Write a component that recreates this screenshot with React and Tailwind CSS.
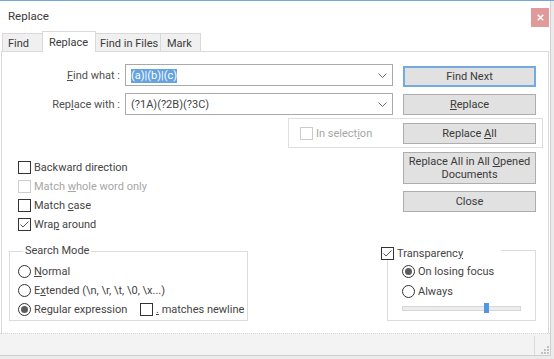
import React from "react";

// small checkbox square, optional tick
const Check = ({ checked, disabled }) => (
  <span
    className={`w-[13px] h-[13px] shrink-0 border bg-white flex items-center justify-center ${
      disabled ? "border-[#cccccc]" : "border-[#333333]"
    }`}
  >
    {checked && (
      <svg width="11" height="11" viewBox="0 0 11 11">
        <path d="M1.5 5.5 L4 8 L9.5 2.5" fill="none" stroke="#5a5a5a" strokeWidth="1" />
      </svg>
    )}
  </span>
);

const Radio = ({ checked }) => (
  <span className="w-[13px] h-[13px] shrink-0 rounded-full border border-[#333333] bg-white flex items-center justify-center">
    {checked && <span className="w-[7px] h-[7px] rounded-full bg-[#5c5c5c]" />}
  </span>
);

const Btn = ({ children, focused, className = "" }) => (
  <div
    className={`w-[133px] shrink-0 flex items-center justify-center text-center bg-[#e1e1e1] text-[#3a3a3a] ${
      focused ? "border-2 border-[#74aadd]" : "border border-[#adadad]"
    } ${className}`}
  >
    {children}
  </div>
);

const Chevron = () => (
  <svg width="9" height="5" viewBox="0 0 9 5" className="shrink-0">
    <polyline points="0.5,0.5 4.5,4.5 8.5,0.5" fill="none" stroke="#6d6d6d" strokeWidth="1" />
  </svg>
);

const CheckRow = ({ label, checked, disabled }) => (
  <div className="h-[19px] flex items-center">
    <Check checked={checked} disabled={disabled} />
    <span className={`ml-[3px] ${disabled ? "text-[#a6a6a6]" : ""}`}>{label}</span>
  </div>
);

const RadioRow = ({ label, checked, className = "" }) => (
  <div className={`flex items-center ${className}`}>
    <Radio checked={checked} />
    <span className="ml-[3px]">{label}</span>
  </div>
);

export default function App() {
  return (
    <div className="w-[554px] h-[359px] bg-[#ebebeb] border-t border-[#72a8d8] font-['Roboto',sans-serif] text-[11px] leading-[15px] text-[#444444] overflow-hidden">
      <div className="w-[551px] h-[355px] bg-white border-r border-b border-[#cfcfcf] flex flex-col">
        {/* Title bar */}
        <div className="h-[30px] shrink-0 flex justify-between">
          <span className="pl-[8px] pt-[8px] text-[11.5px] text-[#3a3a3a]">Replace</span>
          <div className="mt-[7px] mr-[1px] w-[18px] h-[19px] bg-[#e09a9a] flex items-center justify-center">
            <svg width="7" height="7" viewBox="0 0 7 7">
              <path d="M0.8 0.8 L6.2 6.2 M6.2 0.8 L0.8 6.2" stroke="#ffffff" strokeWidth="1.6" />
            </svg>
          </div>
        </div>

        {/* Tabs */}
        <div className="h-[21px] shrink-0 ml-[1px] w-[548px] flex items-end text-[#3a3a3a]">
          <div className="w-[1px] h-[1px] bg-[#d9d9d9]" />
          <div className="w-[40px] h-[19px] border-l border-t border-b border-[#d9d9d9] bg-[#f0f0f0] flex items-center pl-[5px] pt-[1px]">
            Find
          </div>
          <div className="w-[54px] h-[21px] border-l border-t border-r border-[#d9d9d9] bg-white flex items-center pl-[6px]">
            Replace
          </div>
          <div className="w-[64px] h-[19px] border-t border-b border-[#d9d9d9] bg-[#f0f0f0] flex items-center pl-[4px] pt-[1px]">
            Find in Files
          </div>
          <div className="w-[41px] h-[19px] border border-[#d9d9d9] bg-[#f0f0f0] flex items-center pl-[6px] pt-[1px]">
            Mark
          </div>
          <div className="flex-1 h-[1px] bg-[#d9d9d9]" />
        </div>

        {/* Tab panel */}
        <div className="ml-[1px] w-[548px] flex-1 border-l border-r border-[#d9d9d9] flex flex-col">
          {/* Find what */}
          <div className="mt-[12px] flex items-start">
            <div className="w-[118px] h-[22px] flex items-center justify-end text-[#4f4f4f]">
              <span>
                <u>F</u>ind what :
              </span>
            </div>
            <div className="ml-[5px] w-[268px] h-[22px] border border-[#a9a9a9] flex items-center pl-[5px] pr-[5px]">
              <span className="flex-1">
                <span className="bg-[#64a2e0] text-white leading-[14px] inline-block">(a)|(b)|(c)</span>
              </span>
              <Chevron />
            </div>
            <Btn focused className="ml-[10px] mt-[2px] h-[21px]">
              Find Next
            </Btn>
          </div>

          {/* Replace with */}
          <div className="mt-[6px] flex items-start">
            <div className="w-[118px] h-[22px] flex items-center justify-end text-[#4f4f4f]">
              <span>
                Rep<u>l</u>ace with :
              </span>
            </div>
            <div className="ml-[5px] w-[268px] h-[22px] border border-[#a9a9a9] flex items-center pl-[5px] pr-[5px]">
              <span className="flex-1">(?1A)(?2B)(?3C)</span>
              <Chevron />
            </div>
            <Btn className="ml-[10px] mt-[1px] h-[21px]">
              <span>
                <u>R</u>eplace
              </span>
            </Btn>
          </div>

          {/* In selection group */}
          <div className="mt-[3px] ml-[286px] w-[255px] h-[30px] border border-[#dedede] flex items-center pl-[11px] pr-[6px]">
            <Check disabled />
            <span className="ml-[3px] text-[#a6a6a6]">
              In select<u>i</u>on
            </span>
            <Btn className="ml-auto h-[21px]">
              <span>
                Replace <u>A</u>ll
              </span>
            </Btn>
          </div>

          {/* Lower section */}
          <div className="flex flex-1">
            {/* Left column */}
            <div className="w-[379px] flex flex-col">
              <div className="mt-[10px] ml-[16px] flex flex-col">
                <CheckRow label="Backward direction" />
                <CheckRow
                  disabled
                  label={
                    <>
                      Match <u>w</u>hole word only
                    </>
                  }
                />
                <CheckRow
                  label={
                    <>
                      Match <u>c</u>ase
                    </>
                  }
                />
                <CheckRow
                  checked
                  label={
                    <>
                      Wra<u>p</u> around
                    </>
                  }
                />
              </div>

              <fieldset className="mt-[9px] ml-[7px] w-[239px] border border-[#dcdcdc] pl-[8px] pt-[3px] pb-[1px]">
                <legend className="ml-[5px] px-[2px] leading-[16px]">Search Mode</legend>
                <RadioRow
                  className="h-[19px]"
                  label={
                    <>
                      <u>N</u>ormal
                    </>
                  }
                />
                <RadioRow
                  className="h-[19px]"
                  label={
                    <>
                      E<u>x</u>tended (\n, \r, \t, \0, \x...)
                    </>
                  }
                />
                <div className="h-[19px] flex items-center">
                  <RadioRow
                    checked
                    className="w-[122px]"
                    label={
                      <>
                        Re<u>g</u>ular expression
                      </>
                    }
                  />
                  <Check />
                  <span className="ml-[3px]">
                    <u>.</u> matches newline
                  </span>
                </div>
              </fieldset>
            </div>

            {/* Right column */}
            <div className="w-[155px] flex flex-col">
              <Btn className="ml-[22px] mt-[4px] h-[32px] leading-[13px]">
                <span>
                  Replace All in All <u>O</u>pened
                  <br />
                  Documents
                </span>
              </Btn>
              <Btn className="ml-[22px] mt-[7px] h-[21px]">Close</Btn>

              {/* Transparency */}
              <div className="mt-[34px] flex flex-col">
                <div className="h-[14px] flex items-start">
                  <div className="w-[120px] shrink-0 h-[14px] flex items-center">
                    <Check checked />
                    <span className="ml-[3px]">
                      Transparenc<u>y</u>
                    </span>
                  </div>
                  <div className="flex-1 mt-[4px] h-[10px] border-t border-r border-[#dcdcdc]" />
                </div>
                <div className="ml-[6px] h-[61px] border-l border-r border-b border-[#dcdcdc] pl-[14px] pt-[1px]">
                  <RadioRow checked className="h-[20px]" label="On losing focus" />
                  <RadioRow className="h-[20px]" label="Always" />
                  <div className="mt-[2px] h-[10px] flex items-center">
                    <div className="w-[82px] h-[5px] border-t border-b border-l border-[#d7d7d7] bg-[#ececec]" />
                    <div className="w-[5px] h-[10px] bg-[#4f97e0]" />
                    <div className="w-[32px] h-[5px] border-t border-b border-r border-[#d7d7d7] bg-[#ececec]" />
                  </div>
                </div>
              </div>
            </div>
          </div>
        </div>

        {/* Status bar */}
        <div className="h-[22px] shrink-0 bg-[#f3f3f3] border-t border-dotted border-[#d6d6d6] flex justify-end items-end">
          <div className="w-[1px] h-[19px] bg-[#dcdcdc]" />
          <svg width="15" height="20" viewBox="0 0 15 20">
            <rect x="12" y="11" width="2" height="2" fill="#c2c2c2" />
            <rect x="9" y="14" width="2" height="2" fill="#c2c2c2" />
            <rect x="12" y="14" width="2" height="2" fill="#c2c2c2" />
            <rect x="6" y="17" width="2" height="2" fill="#c2c2c2" />
            <rect x="9" y="17" width="2" height="2" fill="#c2c2c2" />
            <rect x="12" y="17" width="2" height="2" fill="#c2c2c2" />
          </svg>
        </div>
      </div>
    </div>
  );
}
